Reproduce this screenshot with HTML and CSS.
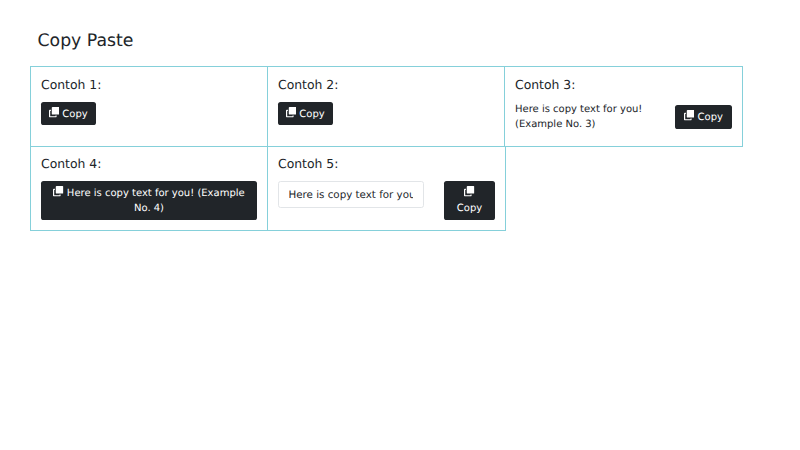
FILE: index.html
```html
<!DOCTYPE html>
<html lang="id">
<head>
<meta charset="utf-8">
<title>Copy Paste</title>
<link rel="stylesheet" href="styles.css">
</head>
<body>
<svg class="defs" width="0" height="0" aria-hidden="true"><defs>
<symbol id="copy" viewBox="0 0 12 12">
<path fill="#fff" d="M4.200 0H11a1 1 0 0 1 1 1v6.800a1 1 0 0 1-1 1H4.200a1 1 0 0 1-1-1V1a1 1 0 0 1 1-1z"/>
<path fill="#fff" d="M1 3.200h1.200v1.300H1.400v6.100h6.100V9.800h1.300V11a1 1 0 0 1-1 1H1a1 1 0 0 1-1-1V4.200a1 1 0 0 1 1-1z"/>
</symbol>
</defs></svg>
<main class="page">
<h1 class="title">Copy Paste</h1>
<div class="row row-a">
<section class="cell cell-std">
<h2 class="label">Contoh 1:</h2>
<button class="btn"><svg class="ico"><use href="#copy"/></svg> Copy</button>
</section>
<section class="cell cell-std">
<h2 class="label">Contoh 2:</h2>
<button class="btn"><svg class="ico"><use href="#copy"/></svg> Copy</button>
</section>
<section class="cell cell-wide">
<h2 class="label">Contoh 3:</h2>
<div class="split">
<p class="copytext">Here is copy text for you! (Example No. 3)</p>
<button class="btn btn-lg"><svg class="ico"><use href="#copy"/></svg> Copy</button>
</div>
</section>
</div>
<div class="row row-b">
<section class="cell cell-std">
<h2 class="label">Contoh 4:</h2>
<button class="btn btn-wide"><svg class="ico"><use href="#copy"/></svg> Here is copy text for you! (Example No. 4)</button>
</section>
<section class="cell cell-wide">
<h2 class="label">Contoh 5:</h2>
<div class="split">
<input class="field" type="text" value="Here is copy text for you! (Example No. 5)">
<button class="btn btn-stack"><svg class="ico"><use href="#copy"/></svg><br>Copy</button>
</div>
</section>
</div>
</main>
</body>
</html>
```
FILE: styles.css
```css
* { box-sizing: border-box; }
html, body { margin: 0; padding: 0; background: #fff; }
body { font-family: "DejaVu Sans", sans-serif; color: #212529; font-size: 10px; line-height: 1.5; text-rendering: geometricPrecision; }
.defs { position: absolute; }
.page { width: 800px; height: 450px; padding: 26px 30px 0; overflow: hidden; }
.title { margin: 0 0 10px 7.500px; font-size: 17.300px; font-weight: 400; line-height: 30px; }
.row { display: flex; width: 713px; }
.row-a { height: 81px; }
.row-b { height: 85px; margin-top: -1px; }
.cell { margin-right: -1px; padding: 8px 10px; border: 1px solid #85d0da; }
.cell-std { width: 238px; }
.cell-wide { width: 239px; }
.row-b .cell { padding-top: 7px; }
.label { margin: 0 0 7px; font-size: 12.400px; font-weight: 400; line-height: 20px; }
.btn { display: inline-block; padding: 4.600px 7.800px 3.200px; border: 0; border-radius: 2.600px; background: #212529; color: #fff; font: 10px/15.600px "DejaVu Sans", sans-serif; text-rendering: geometricPrecision; text-align: center; }
.ico { display: inline-block; width: 10.400px; height: 10.400px; vertical-align: -1px; }
.split { display: flex; align-items: flex-start; justify-content: space-between; }
.copytext { width: 135px; margin: 0; font-size: 10px; line-height: 15.200px; color: #212529; }
.btn-lg { width: 57px; margin-top: 3px; padding: 4.800px 0 3.600px; }
.btn-wide { display: block; width: 216px; }
.field { width: 146px; height: 27px; padding: 0 10px 0 9.500px; border: 1px solid #e2e5e8; border-radius: 2.600px; font: 10.300px "DejaVu Sans", sans-serif; color: #212529; text-rendering: geometricPrecision; }
.btn-stack { width: 51px; padding: 4.600px 0 3.200px; }
```
